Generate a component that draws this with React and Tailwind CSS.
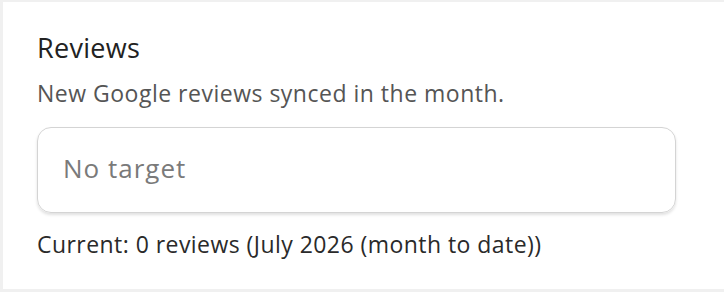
import React from 'react';

const App = () => {
  return (
    <div className="w-[724px] h-[292px] bg-[#f0f0f0] pt-[2px] pl-[3px] overflow-hidden" style={{ fontFamily: '"Open Sans", "Noto Sans", sans-serif' }}>
      <div className="bg-white h-[287px] pl-[34px] pr-[48px] pt-[30px]">
        <h2 className="text-[27px] leading-[32px] tracking-[0.3px] text-[#222]">Reviews</h2>
        <p className="mt-[15px] text-[23px] leading-[28px] tracking-[0.5px] text-[#555]">New Google reviews synced in the month.</p>
        <div className="mt-[20px] h-[86px] rounded-[14px] border border-[#d4d4d4] shadow-[0_2px_3px_rgba(0,0,0,0.12)] flex items-center px-[25px] pb-[4px]">
          <span className="text-[26px] leading-[30px] tracking-[1px] text-[#7a7a7a]">No target</span>
        </div>
        <p className="mt-[17px] text-[23px] leading-[28px] tracking-[0.45px] text-[#2a2a2a]">Current: 0 reviews (July 2026 (month to date))</p>
      </div>
    </div>
  );
};

export default App;
